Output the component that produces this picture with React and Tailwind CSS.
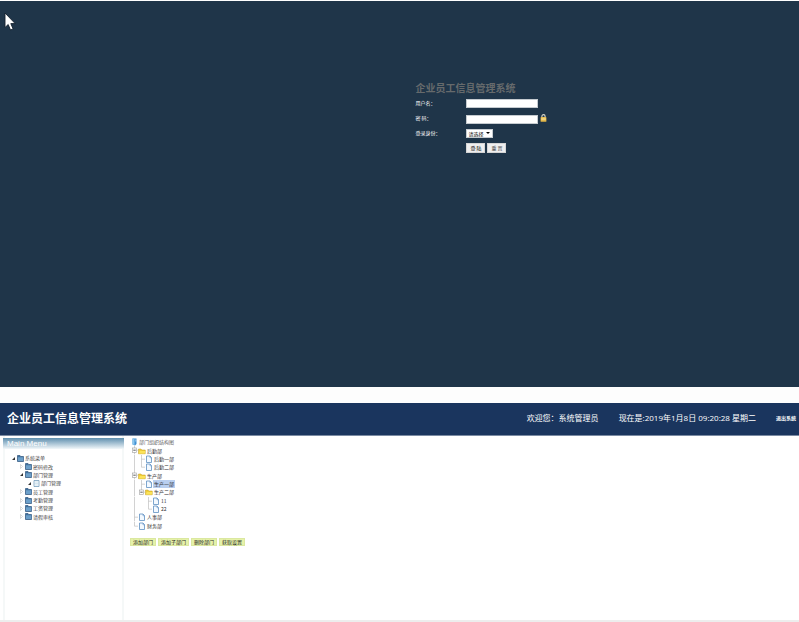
import React, { useState } from 'react';

const menuItems = [
  { nombre: '系统菜单', level: 0, open: true, icon: 'folder' },
  { nombre: '密码修改', level: 1, open: false, icon: 'folder' },
  { nombre: '部门管理', level: 1, open: true, icon: 'folder' },
  { nombre: '部门管理', level: 2, open: true, icon: 'page' },
  { nombre: '员工管理', level: 1, open: false, icon: 'folder' },
  { nombre: '考勤管理', level: 1, open: false, icon: 'folder' },
  { nombre: '工资管理', level: 1, open: false, icon: 'folder' },
  { nombre: '请假审核', level: 1, open: false, icon: 'folder' },
];

const indents = ['pl-[6px]', 'pl-[14px]', 'pl-[22px]'];

// guides: one entry for each column of connecting lines
const departments = [
  { id: 1, name: '后勤部', guides: ['minus'], folder: true },
  { id: 2, name: '后勤一部', guides: ['line', 'tee'] },
  { id: 3, name: '后勤二部', guides: ['line', 'end'] },
  { id: 4, name: '生产部', guides: ['minus'], folder: true },
  { id: 5, name: '生产一部', guides: ['line', 'tee'] },
  { id: 6, name: '生产二部', guides: ['line', 'minusEnd'], folder: true },
  { id: 7, name: '11', guides: ['line', 'empty', 'tee'] },
  { id: 8, name: '22', guides: ['line', 'empty', 'end'] },
  { id: 9, name: '人事部', guides: ['tee'] },
  { id: 10, name: '财务部', guides: ['end'] },
];

const actions = ['添加部门', '添加子部门', '删除部门', '获取设置'];

function Cursor() {
  return (
    <svg className="absolute left-1 top-[11px] h-5 w-3" viewBox="0 0 12 20" aria-hidden="true">
      <path d="M1 1v14.5l3.2-3 2.3 5.5 2.6-1.1-2.3-5.3h4.4z" fill="#fff" stroke="#14202e" strokeWidth="0.9" />
    </svg>
  );
}

function Lock() {
  return (
    <svg className="h-[8px] w-[7px]" viewBox="0 0 7 8" aria-hidden="true">
      <path d="M1.9 3.6V2.2a1.6 1.6 0 0 1 3.2 0v1.4" fill="none" stroke="#d9d9cc" strokeWidth="1.1" />
      <rect x="0.6" y="3.1" width="5.8" height="4.7" rx="0.6" fill="#e3b544" />
      <path d="M1.2 4.3h4.6M1.2 5.7h4.6" stroke="#fbe9a8" strokeWidth="0.7" />
    </svg>
  );
}

function BlueFolder() {
  return (
    <svg className="h-[7px] w-[7px] shrink-0" viewBox="0 0 14 14" aria-hidden="true">
      <path d="M1 13V1h5l1.5 2H13v10z" fill="#3f6f9c" stroke="#2f5680" strokeWidth="1.4" />
      <path d="M2 12V4.5h10.5V12z" fill="#6c9fc9" />
    </svg>
  );
}

function BluePage() {
  return (
    <svg className="h-[7px] w-[7px] shrink-0" viewBox="0 0 14 14" aria-hidden="true">
      <path d="M2 1h10v12H2z" fill="#f4fafd" stroke="#6e98b8" strokeWidth="1.5" />
      <path d="M4 4h6M4 7h6M4 10h6" stroke="#b9d2e2" />
    </svg>
  );
}

function YellowFolder() {
  return (
    <svg className="h-[8px] w-[8px] shrink-0" viewBox="0 0 16 16" aria-hidden="true">
      <path d="M1 13.5V4h5l1.5 2H14.5v7.5z" fill="#f0cf3a" stroke="#c49a1d" />
      <path d="M2 13l1.5-5h11l-1 5z" fill="#fbe35a" />
    </svg>
  );
}

function Sheet() {
  return (
    <svg className="h-[8px] w-[8px] shrink-0" viewBox="0 0 16 16" aria-hidden="true">
      <path d="M3 2h7l3 3v10H3z" fill="#f3f9ff" stroke="#5e8fc2" strokeWidth="1.6" />
      <path d="M10 2v3.5h3" fill="none" stroke="#5e8fc2" strokeWidth="1.2" />
    </svg>
  );
}

function Computer() {
  return (
    <svg className="h-[8px] w-[7px] shrink-0" viewBox="0 0 14 16" aria-hidden="true">
      <path d="M3 1h8v11l-3 3-5-2z" fill="#3f8fd2" />
      <path d="M3 1h4v13l-4-1z" fill="#8ec8ee" />
      <path d="M8 4h3M8 6h3" stroke="#d5ecfa" />
    </svg>
  );
}

function Arrow({ open }) {
  return (
    <svg className="h-[5px] w-[5px] shrink-0" viewBox="0 0 10 10" aria-hidden="true">
      {open ? (
        <path d="M8 2v6H2z" fill="#333" />
      ) : (
        <path d="M3 1l4 4-4 4z" fill="#fff" stroke="#b5b5b5" />
      )}
    </svg>
  );
}

function Guide({ type }) {
  const minus = type === 'minus' || type === 'minusEnd';
  const last = type === 'end' || type === 'minusEnd';
  return (
    <svg className="h-full w-[7px] shrink-0" viewBox="0 0 7 8" preserveAspectRatio="none" aria-hidden="true">
      {type !== 'empty' && <path d={last ? 'M3.5 0v4' : 'M3.5 0v8'} stroke="#c0c0c0" strokeWidth="0.7" />}
      {type !== 'empty' && type !== 'line' && <path d="M3.5 4h3.5" stroke="#c0c0c0" strokeWidth="0.7" />}
      {minus && <rect x="1.4" y="1.9" width="4.2" height="4.2" fill="#fff" stroke="#a0a0a0" strokeWidth="0.6" />}
      {minus && <path d="M2.3 4h2.4" stroke="#333" strokeWidth="0.8" />}
    </svg>
  );
}

function Login() {
  return (
    <section className="relative h-[386px] bg-[#1f3549] pl-[52%] pt-[80px] text-[5px] leading-[8px] text-white">
      <Cursor />
      <h1 className="text-[10px] font-bold leading-[14px] text-[#666a6c]">企业员工信息管理系统</h1>
      <form className="mt-1" onSubmit={(e) => e.preventDefault()}>
        <div className="flex h-[15px] items-start">
          <label htmlFor="user" className="w-[51px]">用户名：</label>
          <input id="user" type="text" className="h-[9px] w-[72px] border border-[#c5cbd0] bg-white px-px text-black outline-none" />
        </div>
        <div className="flex h-[15px] items-start">
          <label htmlFor="password" className="w-[51px]">密 码：</label>
          <input id="password" type="password" className="mt-px h-[9px] w-[72px] border border-[#c5cbd0] bg-white px-px text-black outline-none" />
          <span className="ml-[2px]"><Lock /></span>
        </div>
        <div className="flex h-[14px] items-start">
          <label htmlFor="role" className="w-[51px]">登录身份：</label>
          <div className="relative">
            <select id="role" className="block h-[9px] w-[27px] appearance-none border border-[#c5cbd0] bg-white pl-px text-[5px] leading-[7px] text-black">
              <option>请选择</option>
              <option>系统管理员</option>
            </select>
            <span className="pointer-events-none absolute right-[3px] top-[3px] border-x-2 border-t-2 border-x-transparent border-t-black" />
          </div>
        </div>
        <div className="flex gap-[2px] pl-[51px]">
          <button type="submit" className="h-[10px] w-[19px] border border-[#d5d5d5] bg-[#efefef] leading-[8px] text-black">登 陆</button>
          <button type="reset" className="h-[10px] w-[19px] border border-[#d5d5d5] bg-[#efefef] leading-[8px] text-[#555]">重 置</button>
        </div>
      </form>
    </section>
  );
}

function MainMenu() {
  return (
    <aside className="ml-[3px] w-[121px] shrink-0 border-x-2 border-[#f5f8f8] pt-[2px]">
      <h2 className="-mx-[2px] h-[11px] bg-linear-to-b from-[#5f8fae] to-[#f3f8fa] pl-1 font-['Liberation_Sans',sans-serif] text-[8px] leading-[12px] text-white">
        Main Menu
      </h2>
      <ul className="mt-[5px] grid h-[67px] auto-rows-fr">
        {menuItems.map((item, i) => (
          <li key={i} className={`flex items-center ${indents[item.level]}`}>
            <a href="#menu" className="flex items-center gap-px text-[5px] leading-[8px] text-[#444]">
              <Arrow open={item.open} />
              {item.icon === 'folder' ? <BlueFolder /> : <BluePage />}
              <span>{item.nombre}</span>
            </a>
          </li>
        ))}
      </ul>
    </aside>
  );
}

function Departments() {
  const [selected, setSelected] = useState(5);

  return (
    <main className="min-w-0 flex-1 pl-[7px] pt-[2px]">
      <ul className="grid h-[92px] auto-rows-fr text-[5px] leading-[8px] text-[#333]">
        <li className="flex items-center gap-px text-[#666]">
          <Computer />
          部门组织结构图
        </li>
        {departments.map((dep) => (
          <li key={dep.id} className="flex min-h-0 items-center">
            {dep.guides.map((type, i) => (
              <Guide key={i} type={type} />
            ))}
            {dep.folder ? <YellowFolder /> : <Sheet />}
            <button
              type="button"
              onClick={() => setSelected(dep.id)}
              className={`h-[8px] px-px text-left ${selected === dep.id ? 'bg-[#b9cff0]' : ''}`}
            >
              {dep.name}
            </button>
          </li>
        ))}
      </ul>
      <div className="-ml-px mt-[8px] flex gap-[2px]">
        {actions.map((action) => (
          <button
            key={action}
            type="button"
            className="h-[8px] border border-[#dbe8a0] bg-[#e6f2a9] px-[2px] text-[5px] leading-[6px] text-[#222]"
          >
            {action}
          </button>
        ))}
      </div>
    </main>
  );
}

export default function App() {
  return (
    <div className="bg-white pt-px font-['Noto_Sans_CJK_SC',sans-serif]">
      <Login />
      <div className="h-4 bg-[#fdfdfd]" />
      <header className="flex h-8 items-center bg-[#1a355e] pb-[2px] pl-[7px] pr-[3px] text-[8px] text-white">
        <h1 className="text-[12px] font-bold">企业员工信息管理系统</h1>
        <span className="ml-auto">欢迎您：系统管理员</span>
        <span className="ml-5 font-['Open_Sans','Noto_Sans_CJK_SC',sans-serif]">现在是:2019年1月8日 09:20:28 星期二</span>
        <a href="#logout" className="ml-5 text-[5px] font-bold">退出系统</a>
      </header>
      <div className="flex min-h-[187px] border-b-2 border-t border-b-[#ededed] border-t-[#7b8ba3]">
        <MainMenu />
        <Departments />
      </div>
    </div>
  );
}
